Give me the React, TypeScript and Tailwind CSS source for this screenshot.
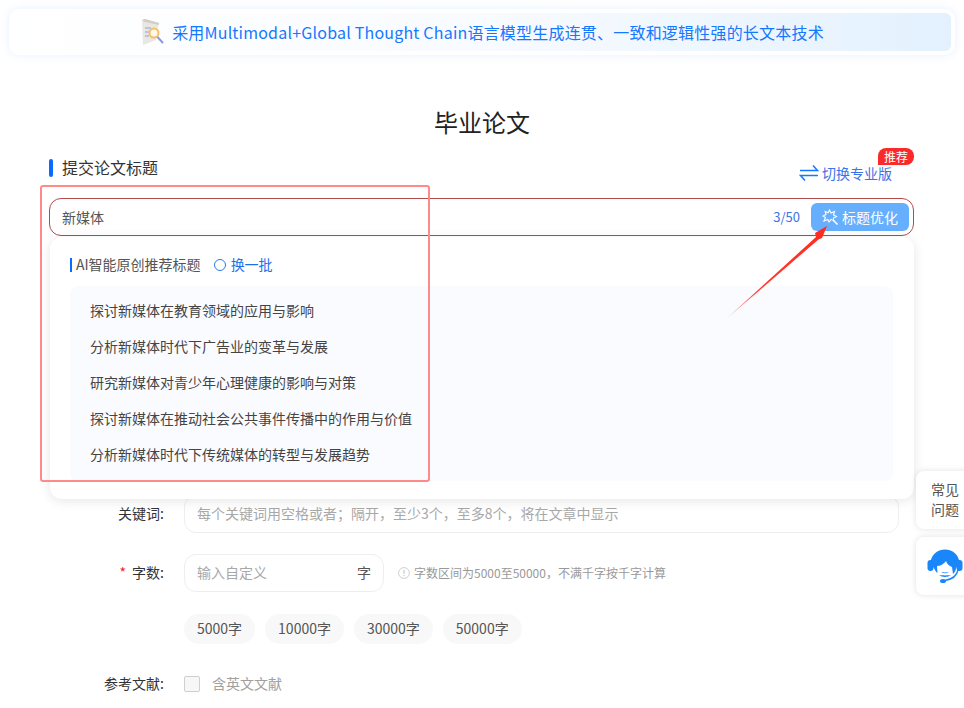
import React from "react";

const suggestions = [
  "探讨新媒体在教育领域的应用与影响",
  "分析新媒体时代下广告业的变革与发展",
  "研究新媒体对青少年心理健康的影响与对策",
  "探讨新媒体在推动社会公共事件传播中的作用与价值",
  "分析新媒体时代下传统媒体的转型与发展趋势",
];

function DocIcon() {
  return (
    <svg width="28" height="28" viewBox="0 0 28 28" className="shrink-0">
      <path d="M2 2 L5 1 L19 5 L18 8 L16 22 L3 27 Z" fill="#e9e7e2" />
      <path d="M2 2 L5 4 L19 7 L19 5 L5 1 Z" fill="#d2cec6" />
      <path d="M5 10 H11 M5 14 H9 M5 18 H9" stroke="#8f9fe0" strokeWidth="1" />
      <circle cx="14" cy="15" r="4.5" fill="#fff8e8" stroke="#f3c168" strokeWidth="2" />
      <path d="M17.5 19 L23 25" stroke="#8d94ea" strokeWidth="2" />
    </svg>
  );
}

function Headset() {
  return (
    <svg width="36" height="36" viewBox="0 0 36 36">
      <path d="M3.5 16 C3.5 7 10 1.5 18 1.5 C26 1.5 32.5 7 32.5 16 L29 20 C29 22 28 24 26 26 L25 19 C22 18 20 16 19 13 C17 16 13 18 10 18 L10.5 25 C8 23 7 20 7 20 Z" fill="#1a86fb" />
      <rect x="0.5" y="12" width="6" height="11" rx="3" fill="#1a86fb" />
      <rect x="29.5" y="12" width="6" height="11" rx="3" fill="#1a86fb" />
      <path d="M12 27 C15 29.5 21 29.5 24 27 C21 27.5 15 27.5 12 27 Z" fill="#1a86fb" />
      <path d="M14 24 Q18 26.5 22 24 Q18 24.8 14 24 Z" fill="#1a86fb" />
      <path d="M31 22 C30 27 27 31 18 32.5" fill="none" stroke="#1a86fb" strokeWidth="1.4" />
      <ellipse cx="16" cy="33" rx="3" ry="2" fill="#1a86fb" />
    </svg>
  );
}

function Wand() {
  return (
    <svg width="17" height="17" viewBox="0 0 17 17" fill="none" stroke="#fff" strokeWidth="1.1">
      <path d="M7.5 1 L9 4 L12.5 2.5 L11.5 6 L14.5 7.5 L11.5 9 L11.5 11.5 L9 10.5 L7 13 L5.8 10.5 L2 12 L3.5 8.5 L1 7 L4 5.5 L3.2 2.5 L6 3.8 Z" />
      <path d="M11.5 11.5 L15.5 15.5" strokeWidth="1.6" />
    </svg>
  );
}

function Swap() {
  return (
    <svg width="20" height="18" viewBox="0 0 20 18" fill="none" stroke="#1677ff" strokeWidth="1.5">
      <path d="M1 6.5 H18.5 L14 1.5" />
      <path d="M19 11.5 H1.5 L6 16.5" />
    </svg>
  );
}

function Info() {
  return (
    <svg width="12" height="12" viewBox="0 0 12 12" fill="none" className="shrink-0">
      <circle cx="6" cy="6" r="5.4" stroke="#cfcfcf" />
      <path d="M6 3 V7 M6 8 V9" stroke="#bdbdbd" />
    </svg>
  );
}

export default function App() {
  return (
    <div
      className="relative h-[708px] w-[964px] overflow-hidden bg-white text-[14px] text-[#333]"
      style={{ fontFamily: '"Noto Sans CJK SC", "Liberation Sans", sans-serif' }}
    >
      {/* Banner */}
      <div className="px-[9px] pt-[9px]">
        <div className="rounded-[10px] bg-white p-[4px] shadow-[0_0_10px_rgba(22,119,255,0.10)]">
          <div className="flex h-[38px] items-center justify-center gap-[4px] rounded-[6px] bg-gradient-to-r from-white via-[#f8fbff] to-[#e3f1fe] text-[16px] tracking-[0.2px] text-[#1677ff]">
            <DocIcon />
            <span>采用Multimodal+Global Thought Chain语言模型生成连贯、一致和逻辑性强的长文本技术</span>
          </div>
        </div>
      </div>

      <h1 className="mt-[49px] text-center text-[24px] font-normal leading-[36px] text-[#222]">毕业论文</h1>

      {/* Section header */}
      <div className="mt-[12px] flex h-[32px] items-center justify-between pl-[49px] pr-[50px]">
        <div className="flex items-center gap-[9px]">
          <span className="h-[18px] w-[4px] rounded-[2px] bg-[#0a6cff]" />
          <span className="pb-[2px] text-[16px] text-[#333]">提交论文标题</span>
        </div>
        <div className="relative mr-[22px] mt-[10px] flex items-center gap-[3px] text-[14px] text-[#3d72e8]">
          <Swap />
          <span>切换专业版</span>
          <span className="absolute -right-[22px] -top-[15px] rounded-[8px] rounded-bl-none bg-[#fb2a2a] px-[6px] text-[12px] leading-[17px] text-white">
            推荐
          </span>
        </div>
      </div>

      {/* Title input with dropdown */}
      <div className="relative z-10 ml-[49px] mt-[14px] w-[865px]">
        <div className="flex h-[38px] items-center rounded-[12px] border border-[#b24c4c] bg-white pl-[12px] pr-[4px]">
          <span className="flex-1 text-[14px] text-[#555]">新媒体</span>
          <span className="mr-[11px] text-[13px] text-[#3d72e8]">3/50</span>
          <button className="flex h-[28px] w-[98px] items-center justify-center gap-[3px] rounded-[6px] bg-[#66afff] text-[14px] text-white">
            <Wand />
            标题优化
          </button>
        </div>
        <div className="absolute left-[1px] right-0 top-[39px] h-[262px] rounded-[12px] bg-white px-[20px] pt-[19px] shadow-[0_2px_12px_rgba(0,0,0,0.10)]">
          <div className="flex h-[18px] items-center text-[14px] text-[#555]">
            <span className="mr-[4px] h-[14px] w-[2px] bg-[#0a6cff]" />
            <span className="pb-[2px]">AI智能原创推荐标题</span>
            <span className="ml-[13px] h-[12px] w-[12px] rounded-full border-[1.5px] border-[#2a7de8]" />
            <span className="ml-[5px] pb-[2px] text-[#1c6fea]">换一批</span>
          </div>
          <ul className="mt-[12px] mr-[1px] h-[195px] rounded-[8px] bg-[#fafbff] pl-[20px] pt-[6px] text-[14px] text-[#444]">
            {suggestions.map((s) => (
              <li key={s} className="h-[36px] leading-[36px]">
                {s}
              </li>
            ))}
          </ul>
        </div>
      </div>

      {/* Form */}
      <div className="ml-[104px] mt-[259px] w-[795px] text-[14px]">
        <div className="flex items-center">
          <label className="w-[60px] pb-[2px] text-right text-[#333]">关键词:</label>
          <div className="ml-[20px] flex h-[38px] flex-1 items-center rounded-[12px] border border-[#eeeeee] px-[12px] pb-[2px] text-[#a8a8a8]">
            每个关键词用空格或者；隔开，至少3个，至多8个，将在文章中显示
          </div>
        </div>
        <div className="mt-[21px] flex items-center">
          <label className="w-[60px] pb-[2px] text-right text-[#333]">
            <span className="mr-[6px] text-[#f5222d]">*</span>字数:
          </label>
          <div className="ml-[20px] flex h-[38px] w-[200px] items-center justify-between rounded-[12px] border border-[#eeeeee] px-[12px] pb-[2px] text-[#a8a8a8]">
            <span>输入自定义</span>
            <span className="text-[#555]">字</span>
          </div>
          <span className="ml-[14px] flex items-center gap-[4px] text-[12px] text-[#999]">
            <Info />
            字数区间为5000至50000，不满千字按千字计算
          </span>
        </div>
        <div className="ml-[80px] mt-[22px] flex gap-[10px]">
          {["5000字", "10000字", "30000字", "50000字"].map((c) => (
            <span key={c} className="flex h-[30px] items-center rounded-[15px] bg-[#f8f8f8] px-[13px] pb-[2px] text-[#555]">
              {c}
            </span>
          ))}
        </div>
        <div className="mt-[29px] flex items-center">
          <label className="w-[60px] whitespace-nowrap text-right text-[#333]">参考文献:</label>
          <span className="ml-[20px] h-[16px] w-[16px] rounded-[2px] border border-[#cfcfcf] bg-[#f7f7f7]" />
          <span className="ml-[12px] text-[#a0a0a0]">含英文文献</span>
        </div>
      </div>

      {/* Side widgets */}
      <div className="absolute left-[916px] top-[471px] z-20 flex flex-col gap-[8px]">
        <div className="flex h-[58px] w-[60px] items-center rounded-l-[8px] bg-white pb-[2px] pl-[15px] text-[14px] leading-[20px] text-[#555] shadow-[0_0_6px_rgba(0,0,0,0.12)]">
          常见<br />问题
        </div>
        <div className="flex h-[58px] w-[60px] items-center rounded-l-[8px] bg-white pl-[11px] shadow-[0_0_6px_rgba(0,0,0,0.12)]">
          <Headset />
        </div>
      </div>

      {/* Annotation */}
      <div className="absolute left-[40px] top-[185px] z-30 h-[297px] w-[390px] rounded-[3px] border-2 border-[#ff8a8a]" />
      <svg className="absolute left-[720px] top-[220px] z-30" width="115" height="105" viewBox="0 0 115 105">
        <defs>
          <linearGradient id="arrowGrad" x1="0" y1="1" x2="1" y2="0">
            <stop offset="0" stopColor="#ffd0d0" />
            <stop offset="0.3" stopColor="#ff3a30" />
            <stop offset="1" stopColor="#ff2a20" />
          </linearGradient>
        </defs>
        <path d="M5 100 L96 17 L95 13 L107 6 L102 18 L98.5 19.5 Z" fill="url(#arrowGrad)" />
      </svg>
    </div>
  );
}
